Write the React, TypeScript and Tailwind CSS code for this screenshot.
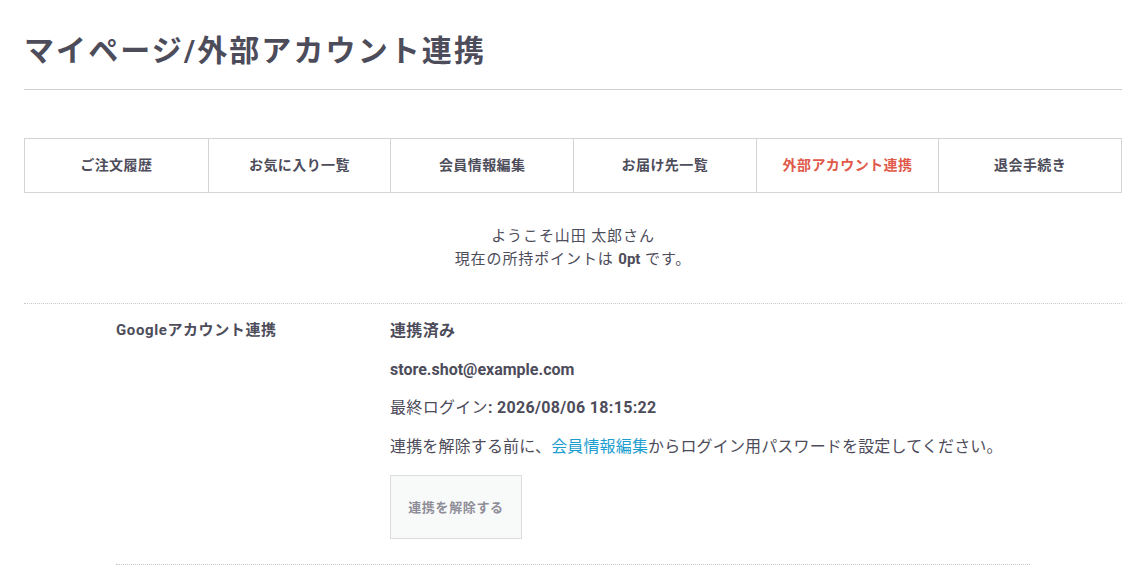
const tabs = ['ご注文履歴', 'お気に入り一覧', '会員情報編集', 'お届け先一覧', '外部アカウント連携', '退会手続き'];

export default function App() {
  return (
    <div
      className="min-h-screen bg-white px-[24px] text-[#4d4c5a]"
      style={{ fontFamily: 'Roboto, "Noto Sans CJK JP", sans-serif' }}
    >
      {/* page title */}
      <div className="flex h-[90px] items-center border-b border-[#cfcfd3] pt-[12px]">
        <h1 className="text-[30px] font-bold tracking-[0.07em]">マイページ/外部アカウント連携</h1>
      </div>

      {/* mypage tabs */}
      <ul className="mt-[48px] grid h-[55px] grid-cols-6 border border-[#d4d4d8]">
        {tabs.map((t, i) => (
          <li
            key={t}
            className={
              'flex items-center justify-center text-[14px] font-bold tracking-[0.03em] ' +
              (i > 0 ? 'border-l border-[#d4d4d8] ' : '') +
              (t === '外部アカウント連携' ? 'text-[#e0594a]' : '')
            }
          >
            {t}
          </li>
        ))}
      </ul>

      {/* welcome */}
      <div className="mt-[32px] text-center text-[15px] leading-[23px] tracking-[0.06em]">
        <p>ようこそ山田 太郎さん</p>
        <p>
          現在の所持ポイントは <span className="font-bold tracking-normal">0pt</span> です。
        </p>
      </div>

      {/* linked accounts */}
      <div className="mt-[32px] border-t border-dotted border-[#c8c8cc]">
        <div className="mx-[92px] flex border-b border-dotted border-[#c8c8cc] pb-[25px] pt-[15px]">
          <div className="w-[274px] shrink-0 text-[15px] font-bold leading-[23px] tracking-[0.04em]">Googleアカウント連携</div>
          <div className="flex flex-col gap-[15.5px] text-[16px] leading-[23px] tracking-[0.02em]">
            <p className="font-bold">連携済み</p>
            <p className="font-bold tracking-normal">store.shot@example.com</p>
            <p>
              最終ログイン<span className="font-bold">: 2026/08/06 18:15:22</span>
            </p>
            <p className="tracking-[0.01em]">
              連携を解除する前に、<a className="text-[#1b9dcf]">会員情報編集</a>からログイン用パスワードを設定してください。
            </p>
            <button className="mt-[2px] h-[64px] w-[132px] border border-[#dcdcdc] bg-[#f8f9f9] text-[13px] font-bold tracking-[0.05em] text-[#8e8d98]">
              連携を解除する
            </button>
          </div>
        </div>
      </div>
    </div>
  );
}
